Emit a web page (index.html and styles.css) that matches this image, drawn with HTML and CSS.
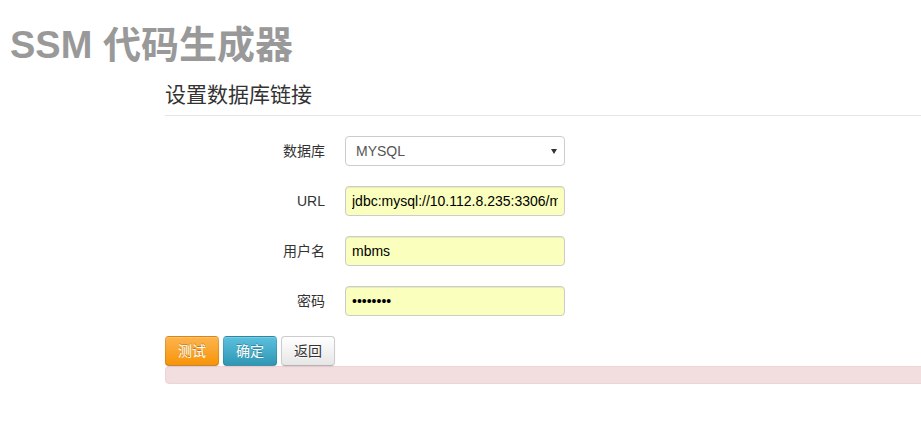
FILE: index.html
```html
<!DOCTYPE html>
<html lang="zh-CN">
<head>
<meta charset="utf-8">
<title>SSM 代码生成器</title>
<link rel="stylesheet" href="styles.css">
</head>
<body>
<h1 class="page-title">SSM 代码生成器</h1>
<div class="panel">
  <form class="form-horizontal">
    <div class="legend">设置数据库链接</div>
    <div class="control-group">
      <label class="control-label">数据库</label>
      <div class="controls">
        <div class="select-wrap">
          <select class="field select"><option>MYSQL</option></select>
          <span class="caret"></span>
        </div>
      </div>
    </div>
    <div class="control-group">
      <label class="control-label">URL</label>
      <div class="controls"><input class="field filled" type="text" value="jdbc:mysql://10.112.8.235:3306/mbms"></div>
    </div>
    <div class="control-group">
      <label class="control-label">用户名</label>
      <div class="controls"><input class="field filled" type="text" value="mbms"></div>
    </div>
    <div class="control-group">
      <label class="control-label">密码</label>
      <div class="controls"><input class="field filled" type="password" value="12345678"></div>
    </div>
    <div class="actions">
      <button type="button" class="btn btn-warning">测试</button>
      <button type="button" class="btn btn-info">确定</button>
      <button type="button" class="btn">返回</button>
    </div>
    <div class="alert-error"></div>
  </form>
</div>
</body>
</html>
```
FILE: styles.css
```css
html, body {
  margin: 0;
  padding: 0;
  background: #fff;
  overflow-x: hidden;
}
body {
  font-family: "Liberation Sans", Arial, "Noto Sans CJK SC", sans-serif;
  font-size: 14px;
  line-height: 20px;
  color: #333;
}
.page-title {
  margin: 22px 0 0 10px;
  font-size: 38px;
  line-height: 46px;
  font-weight: bold;
  color: #999;
}
.panel {
  margin: 7px -40px 0 165px;
}
.legend {
  font-size: 21px;
  line-height: 40px;
  color: #333;
  border-bottom: 1px solid #e5e5e5;
  margin-bottom: 20px;
}
.control-group {
  display: flex;
  align-items: center;
  margin-bottom: 20px;
  height: 30px;
}
.control-label {
  width: 160px;
  text-align: right;
  color: #333;
}
.controls {
  margin-left: 20px;
}
.field {
  box-sizing: border-box;
  width: 220px;
  height: 30px;
  padding: 4px 6px;
  border: 1px solid #ccc;
  border-radius: 4px;
  font-family: "Liberation Sans", Arial, "Noto Sans CJK SC", sans-serif;
  font-size: 14px;
  color: #000;
  background: #fff;
  outline: none;
  box-shadow: inset 0 1px 1px rgba(0,0,0,.075);
  margin: 0;
}
.filled {
  background: #faffbd;
}
.select-wrap {
  position: relative;
}
.select {
  -webkit-appearance: none;
  appearance: none;
  padding-left: 10px;
  color: #555;
  box-shadow: none;
}
.caret {
  position: absolute;
  right: 8px;
  top: 13px;
  width: 0;
  height: 0;
  border-left: 3px solid transparent;
  border-right: 3px solid transparent;
  border-top: 5px solid #333;
  pointer-events: none;
}
.actions {
  display: flex;
  gap: 4px;
}
.btn {
  box-sizing: border-box;
  height: 30px;
  padding: 4px 12px;
  font-family: "Liberation Sans", Arial, "Noto Sans CJK SC", sans-serif;
  font-size: 14px;
  line-height: 20px;
  color: #333;
  text-shadow: 0 1px 1px rgba(255,255,255,.75);
  background: linear-gradient(#fff, #e6e6e6);
  border: 1px solid #ccc;
  border-bottom-color: #b3b3b3;
  border-radius: 4px;
  box-shadow: inset 0 1px 0 rgba(255,255,255,.2), 0 1px 2px rgba(0,0,0,.05);
  margin: 0;
}
.btn-warning {
  color: #fff;
  text-shadow: 0 -1px 0 rgba(0,0,0,.25);
  background: linear-gradient(#fbb450, #f89406);
  border-color: rgba(0,0,0,.1) rgba(0,0,0,.1) rgba(0,0,0,.25);
}
.btn-info {
  color: #fff;
  text-shadow: 0 -1px 0 rgba(0,0,0,.25);
  background: linear-gradient(#5bc0de, #2f96b4);
  border-color: rgba(0,0,0,.1) rgba(0,0,0,.1) rgba(0,0,0,.25);
}
.alert-error {
  height: 16px;
  background: #f2dede;
  border: 1px solid #eed3d7;
  border-radius: 4px;
}
```
